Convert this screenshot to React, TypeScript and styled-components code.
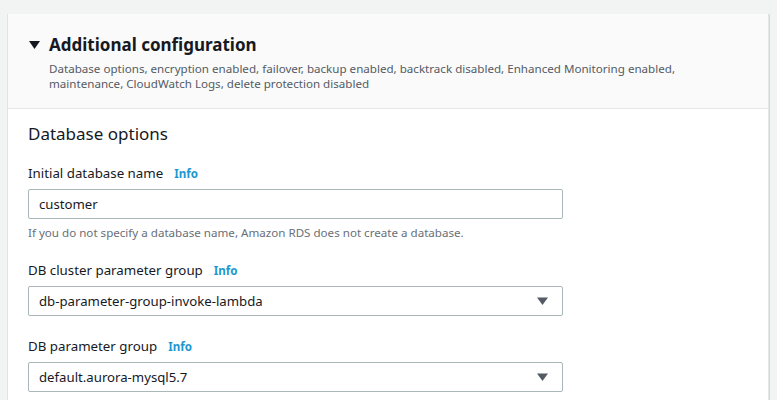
import React from "react";
import styled, { createGlobalStyle } from "styled-components";

const Global = createGlobalStyle`
  html, body { margin: 0; padding: 0; background: #f2f3f3; }
  body { font-family: "Noto Sans", "Open Sans", Arial, sans-serif; color: #16191f; }
`;

const Page = styled.div`
  padding: 14px 9px 0 7px;
  height: 386px;
  overflow: hidden;
`;

const Panel = styled.section`
  background: #ffffff;
  border-left: 1px solid #e1e4e4;
  box-shadow: 1px 0 0 #e4e6e6, 2px 0 0 #d5dbdb;
  height: 400px;
`;

const Header = styled.div`
  background: #fafafa;
  border-bottom: 1px solid #e6e6e6;
  padding: 19px 20px 17px 21px;
  display: flex;
  gap: 8px;
`;

const Caret = styled.svg`
  width: 12px;
  height: 12px;
  margin-top: 6px;
  flex: none;
`;

const HeaderText = styled.div`
  display: flex;
  flex-direction: column;
`;

const Title = styled.h2`
  margin: 0;
  font-size: 17px;
  font-weight: 700;
  line-height: 24px;
  color: #16191f;
`;

const Desc = styled.p`
  margin: 4px 0 0;
  font-size: 11.6px;
  line-height: 15px;
  color: #545b64;
  max-width: 640px;
`;

const Body = styled.div`
  padding: 13px 20px;
  display: flex;
  flex-direction: column;
`;

const SectionTitle = styled.h3`
  margin: 0 0 17px;
  font-size: 17px;
  font-weight: 400;
  line-height: 24px;
`;

const Field = styled.div<{ $gap: number }>`
  display: flex;
  flex-direction: column;
  margin-bottom: ${(p) => p.$gap}px;
`;

const Label = styled.label`
  font-size: 13.3px;
  line-height: 20px;
  color: #16191f;
  margin-bottom: 5px;
  display: flex;
  align-items: baseline;
  gap: 11px;
`;

const Info = styled.span`
  font-size: 11.6px;
  font-weight: 700;
  color: #1c97d1;
`;

const Box = styled.div`
  box-sizing: border-box;
  width: 535px;
  height: 30px;
  border: 1px solid #aab7b8;
  border-radius: 2px;
  background: #fff;
  display: flex;
  align-items: center;
  justify-content: space-between;
  padding: 0 14px 0 10px;
  font-size: 13.2px;
  color: #16191f;
`;

const Hint = styled.div`
  font-size: 11.6px;
  line-height: 15px;
  color: #687078;
  margin-top: 6px;
`;

const Arrow = () => (
  <svg width="11" height="10" viewBox="0 0 11 10">
    <path d="M0 1.5 L11 1.5 L5.5 9 Z" fill="#545b64" />
  </svg>
);

export default function App() {
  return (
    <>
      <Global />
      <Page>
        <Panel>
          <Header>
            <Caret viewBox="0 0 12 12">
              <path d="M0 2 L11 2 L5.5 10 Z" fill="#16191f" />
            </Caret>
            <HeaderText>
              <Title>Additional configuration</Title>
              <Desc>
                Database options, encryption enabled, failover, backup enabled, backtrack disabled, Enhanced Monitoring enabled, maintenance, CloudWatch Logs, delete protection disabled
              </Desc>
            </HeaderText>
          </Header>
          <Body>
            <SectionTitle>Database options</SectionTitle>
            <Field $gap={20}>
              <Label>
                Initial database name <Info>Info</Info>
              </Label>
              <Box>customer</Box>
              <Hint>If you do not specify a database name, Amazon RDS does not create a database.</Hint>
            </Field>
            <Field $gap={20}>
              <Label>
                DB cluster parameter group <Info>Info</Info>
              </Label>
              <Box>
                db-parameter-group-invoke-lambda
                <Arrow />
              </Box>
            </Field>
            <Field $gap={20}>
              <Label>
                DB parameter group <Info>Info</Info>
              </Label>
              <Box>
                default.aurora-mysql5.7
                <Arrow />
              </Box>
            </Field>
          </Body>
        </Panel>
      </Page>
    </>
  );
}
